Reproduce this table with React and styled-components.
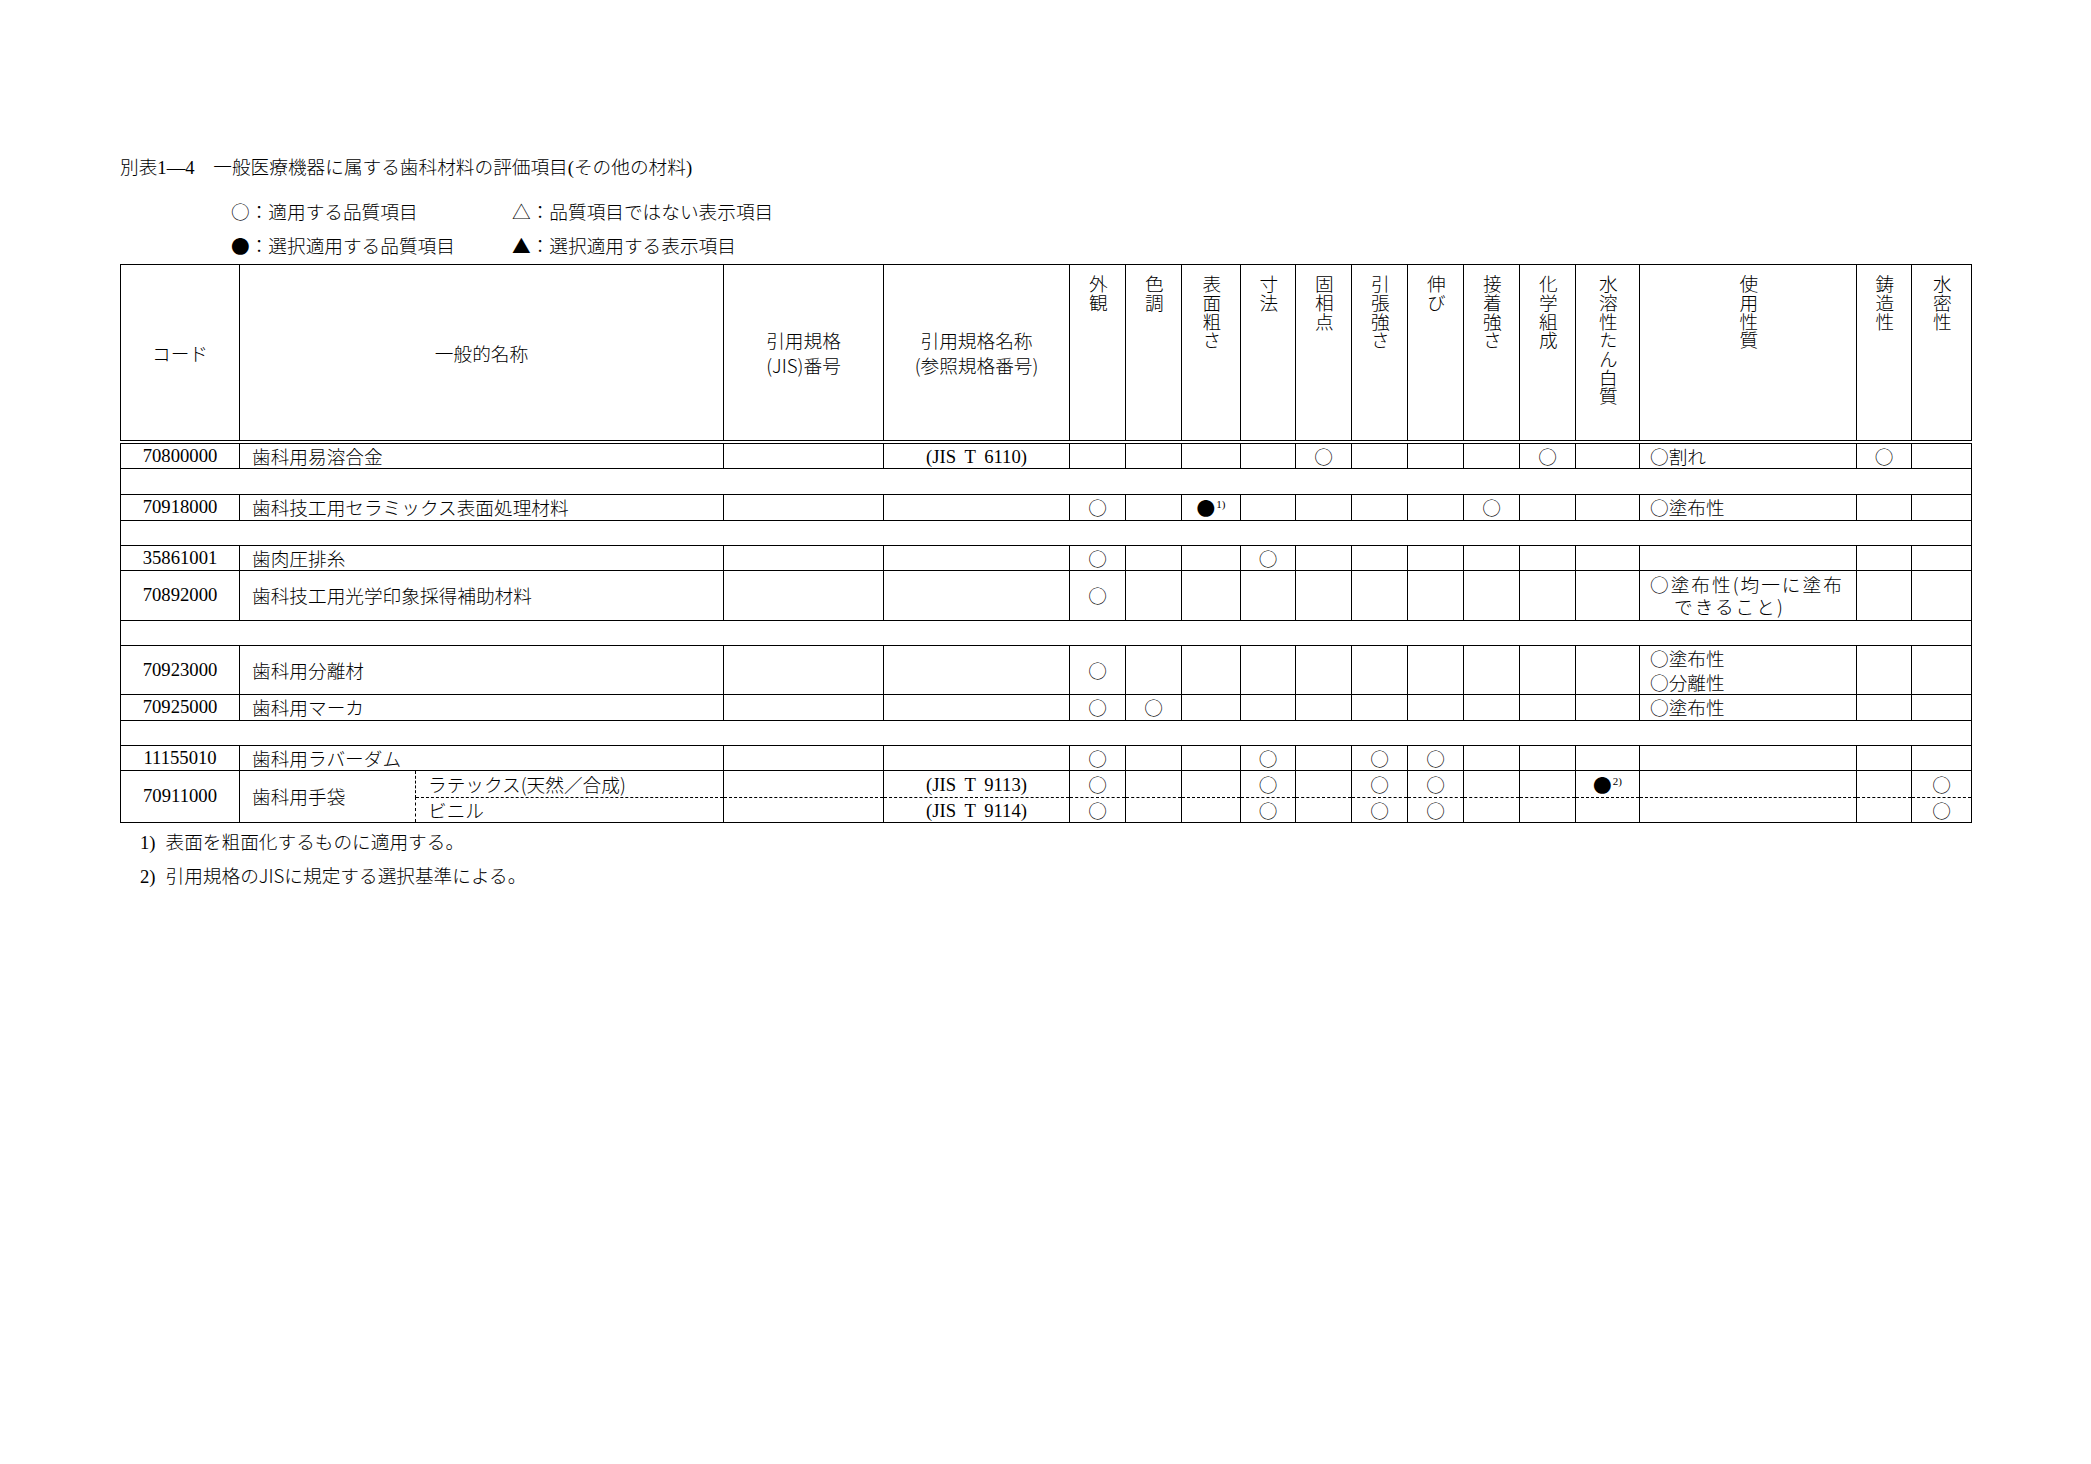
import React from 'react';
import styled, { createGlobalStyle, css } from 'styled-components';

const SERIF = '"Liberation Serif", "Noto Sans CJK JP", serif';
const CJK = '"Noto Sans CJK JP", "Liberation Serif", sans-serif';
const FS = '18.67px';

const GlobalStyle = createGlobalStyle`
  html, body { margin: 0; padding: 0; background: #fff; }
  body { font-family: ${SERIF}; color: #000; }
`;

const Page = styled.div`
  width: 2091px;
  min-height: 1464px;
  box-sizing: border-box;
  padding: 155px 0 0 120px;
  font-size: ${FS};
  font-family: ${SERIF};
  font-weight: 300;
`;

const Title = styled.div`
  height: 26px;
  line-height: 26px;
  font-family: ${SERIF};
  white-space: pre;
`;

const Legend = styled.div`
  display: grid;
  grid-template-columns: 281px auto;
  grid-auto-rows: 26px;
  row-gap: 8px;
  margin: 17px 0 6px 111px;
  line-height: 26px;
  font-family: ${CJK};
`;

const Table = styled.table`
  border-collapse: collapse;
  table-layout: fixed;
  width: 1851px;
  border: 1px solid #000;
  font-size: ${FS};
  font-weight: 300;
`;

const Col = styled.col`
  width: ${p => p.$w}px;
`;

const HeadRow = styled.tr`
  height: 177px;
`;

const Th = styled.th`
  border: 1px solid #000;
  border-bottom: 4px double #000;
  padding: ${p => (p.$vertical ? '10px 0 0' : '0')};
  vertical-align: ${p => (p.$vertical ? 'top' : 'middle')};
  text-align: center;
  font-weight: 300;
  font-family: ${CJK};
  line-height: 25px;
`;

const VWrap = styled.div`
  display: flex;
  justify-content: center;
`;

const VText = styled.span`
  writing-mode: vertical-rl;
  text-orientation: upright;
  line-height: 1;
  height: max-content;
  font-family: ${CJK};
`;

const Row = styled.tr`
  height: ${p => p.$h}px;
`;

const Td = styled.td`
  border: 1px solid #000;
  padding: 0 0 0 ${p => p.$pad || 0}px;
  text-align: ${p => (p.$left ? 'left' : 'center')};
  vertical-align: middle;
  line-height: 22px;
  white-space: nowrap;
  font-family: ${p => (p.$serif ? SERIF : CJK)};
  ${p => p.$dashTop && css`border-top-style: dashed;`}
  ${p => p.$dashBottom && css`border-bottom-style: dashed;`}
  ${p => p.$dashLeft && css`border-left-style: dashed;`}
  ${p => p.$dashRight && css`border-right-style: dashed;`}
`;

const Ref = styled.span`
  white-space: pre;
  word-spacing: 4px;
  font-family: ${SERIF};
`;

const Mark = styled.span`
  font-family: "Noto Sans CJK JP", sans-serif;
  line-height: 1;
`;

const Sup = styled.sup`
  font-size: 11px;
  font-family: ${SERIF};
  vertical-align: 7px;
  line-height: 0;
  margin-left: 1px;
`;

const UseLine = styled.div`
  line-height: ${p => p.$lh || 24}px;
  padding-left: ${p => (p.$indent ? 24 : 0)}px;
  letter-spacing: ${p => (p.$spaced ? 2 : 0)}px;
  font-family: ${CJK};
`;

const Notes = styled.div`
  margin-top: 5px;
  padding-left: 20px;
  display: grid;
  grid-auto-rows: 26px;
  row-gap: 8px;
  line-height: 26px;
  font-family: ${CJK};
`;

const NoteNum = styled.span`
  font-family: ${SERIF};
  margin-right: 10px;
`;

const evalWidths = [56, 56, 59, 55, 56, 56, 56, 56, 56, 64, 217, 55, 60];
const evalHeads = ['外観', '色調', '表面粗さ', '寸法', '固相点', '引張強さ', '伸び', '接着強さ', '化学組成', '水溶性たん白質', '使用性質', '鋳造性', '水密性'];

const rows = [
  { code: '70800000', name: '歯科用易溶合金', ref: '(JIS T 6110)', h: 24, marks: { 4: 'o', 8: 'o', 11: 'o' }, use: [{ t: '○割れ' }] },
  { blank: true, h: 26 },
  { code: '70918000', name: '歯科技工用セラミックス表面処理材料', h: 26, marks: { 0: 'o', 2: 'b1', 7: 'o' }, use: [{ t: '○塗布性' }] },
  { blank: true, h: 25 },
  { code: '35861001', name: '歯肉圧排糸', h: 25, marks: { 0: 'o', 3: 'o' } },
  { code: '70892000', name: '歯科技工用光学印象採得補助材料', h: 50, marks: { 0: 'o' }, use: [{ t: '○塗布性(均一に塗布', spaced: true, lh: 22 }, { t: 'できること)', indent: true, spaced: true, lh: 22 }] },
  { blank: true, h: 25 },
  { code: '70923000', name: '歯科用分離材', h: 49, marks: { 0: 'o' }, use: [{ t: '○塗布性' }, { t: '○分離性' }] },
  { code: '70925000', name: '歯科用マーカ', h: 26, marks: { 0: 'o', 1: 'o' }, use: [{ t: '○塗布性' }] },
  { blank: true, h: 25 },
  { code: '11155010', name: '歯科用ラバーダム', h: 25, marks: { 0: 'o', 3: 'o', 5: 'o', 6: 'o' } },
];

const glove = {
  code: '70911000',
  name: '歯科用手袋',
  subs: [
    { name: 'ラテックス(天然／合成)', ref: '(JIS T 9113)', h: 27, marks: { 0: 'o', 3: 'o', 5: 'o', 6: 'o', 9: 'b2', 12: 'o' } },
    { name: 'ビニル', ref: '(JIS T 9114)', h: 25, marks: { 0: 'o', 3: 'o', 5: 'o', 6: 'o', 12: 'o' } },
  ],
};

function MarkCell({ v }) {
  if (!v) return null;
  if (v === 'o') return <Mark>○</Mark>;
  if (v === 'b1') return <><Mark>●</Mark><Sup>1)</Sup></>;
  if (v === 'b2') return <><Mark>●</Mark><Sup>2)</Sup></>;
  return null;
}

function EvalCells({ marks = {}, use, dash }) {
  return evalHeads.map((_, i) => {
    if (i === 10) {
      return (
        <Td key={i} $left $pad={10} {...dash}>
          {(use || []).map((l, j) => (
            <UseLine key={j} $indent={l.indent} $spaced={l.spaced} $lh={l.lh}>{l.t}</UseLine>
          ))}
        </Td>
      );
    }
    return (
      <Td key={i} {...dash}>
        <MarkCell v={marks[i]} />
      </Td>
    );
  });
}

export default function App() {
  return (
    <>
      <GlobalStyle />
      <Page>
        <Title>{'別表1—4　一般医療機器に属する歯科材料の評価項目(その他の材料)'}</Title>
        <Legend>
          <span>○：適用する品質項目</span>
          <span>△：品質項目ではない表示項目</span>
          <span>●：選択適用する品質項目</span>
          <span>▲：選択適用する表示項目</span>
        </Legend>
        <Table>
          <colgroup>
            <Col $w={119} />
            <Col $w={176} />
            <Col $w={308} />
            <Col $w={160} />
            <Col $w={186} />
            {evalWidths.map((w, i) => <Col key={i} $w={w} />)}
          </colgroup>
          <thead>
            <HeadRow>
              <Th>コード</Th>
              <Th colSpan={2}>一般的名称</Th>
              <Th>引用規格<br />(JIS)番号</Th>
              <Th>引用規格名称<br />(参照規格番号)</Th>
              {evalHeads.map((h, i) => (
                <Th key={i} $vertical>
                  <VWrap><VText>{h}</VText></VWrap>
                </Th>
              ))}
            </HeadRow>
          </thead>
          <tbody>
            {rows.map((r, idx) =>
              r.blank ? (
                <Row key={idx} $h={r.h}>
                  <Td colSpan={18} />
                </Row>
              ) : (
                <Row key={idx} $h={r.h}>
                  <Td $serif>{r.code}</Td>
                  <Td colSpan={2} $left $pad={12}>{r.name}</Td>
                  <Td />
                  <Td>{r.ref && <Ref>{r.ref}</Ref>}</Td>
                  <EvalCells marks={r.marks} use={r.use} />
                </Row>
              )
            )}
            <Row $h={glove.subs[0].h}>
              <Td $serif rowSpan={2}>{glove.code}</Td>
              <Td rowSpan={2} $left $pad={12} $dashRight>{glove.name}</Td>
              <Td $left $pad={12} $dashLeft $dashBottom>{glove.subs[0].name}</Td>
              <Td $dashBottom />
              <Td $dashBottom><Ref>{glove.subs[0].ref}</Ref></Td>
              <EvalCells marks={glove.subs[0].marks} dash={{ $dashBottom: true }} />
            </Row>
            <Row $h={glove.subs[1].h}>
              <Td $left $pad={12} $dashLeft $dashTop>{glove.subs[1].name}</Td>
              <Td $dashTop />
              <Td $dashTop><Ref>{glove.subs[1].ref}</Ref></Td>
              <EvalCells marks={glove.subs[1].marks} dash={{ $dashTop: true }} />
            </Row>
          </tbody>
        </Table>
        <Notes>
          <div><NoteNum>1)</NoteNum>表面を粗面化するものに適用する。</div>
          <div><NoteNum>2)</NoteNum>引用規格のJISに規定する選択基準による。</div>
        </Notes>
      </Page>
    </>
  );
}
